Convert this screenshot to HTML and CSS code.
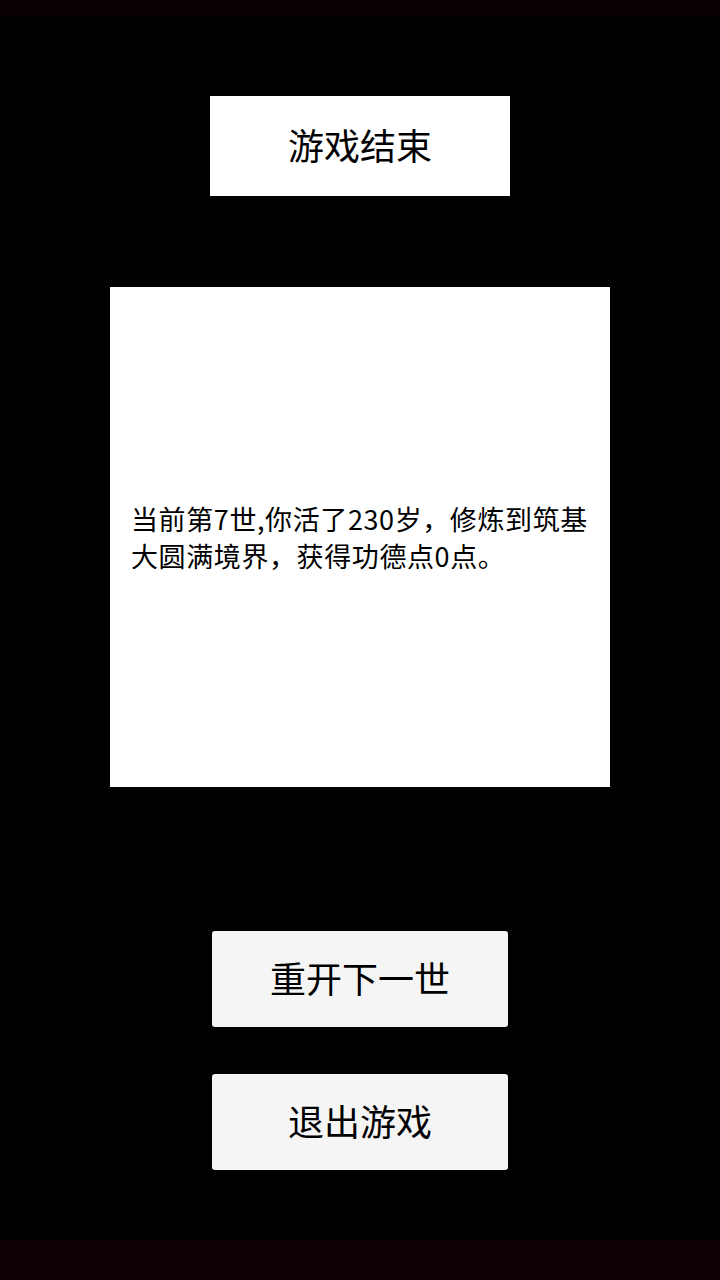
FILE: index.html
```html
<!DOCTYPE html>
<html lang="zh">
<head>
<meta charset="utf-8">
<link rel="stylesheet" href="styles.css">
</head>
<body>
<div class="screen">
  <div class="statusbar"></div>
  <main class="main">
    <div class="title">游戏结束</div>
    <div class="card">
      <p class="summary">当前第7世,你活了230岁，修炼到筑基大圆满境界，获得功德点0点。</p>
    </div>
    <div class="actions">
      <div class="btn">重开下一世</div>
      <div class="btn">退出游戏</div>
    </div>
  </main>
  <div class="navbar"></div>
</div>
</body>
</html>
```
FILE: styles.css
```css
html, body {
  margin: 0;
  padding: 0;
  background: #000;
}
.screen {
  width: 720px;
  height: 1280px;
  display: flex;
  flex-direction: column;
  font-family: "Noto Sans CJK SC", "Noto Sans", sans-serif;
  color: #000;
}
.statusbar {
  height: 16px;
  background: #0a0003;
}
.navbar {
  height: 40px;
  background: #0c0003;
}
.main {
  flex: 1;
  display: flex;
  flex-direction: column;
  align-items: center;
  padding-top: 80px;
  background: #000;
}
.title {
  width: 300px;
  height: 100px;
  background: #fff;
  display: flex;
  align-items: center;
  justify-content: center;
  font-size: 36px;
  padding-bottom: 5px;
  box-sizing: border-box;
  margin-bottom: 91px;
}
.card {
  width: 500px;
  height: 500px;
  background: #fff;
  box-sizing: border-box;
  padding: 0 16px 0 21px;
  display: flex;
  align-items: center;
}
.summary {
  margin: 0;
  font-size: 27px;
  letter-spacing: 0.6px;
  line-height: 37px;
}
.actions {
  margin-top: 144px;
  display: flex;
  flex-direction: column;
  gap: 47px;
}
.btn {
  width: 296px;
  height: 96px;
  background: #f5f5f5;
  border-radius: 3px;
  display: flex;
  align-items: center;
  justify-content: center;
  font-size: 36px;
  padding-bottom: 5px;
  box-sizing: border-box;
}
```
